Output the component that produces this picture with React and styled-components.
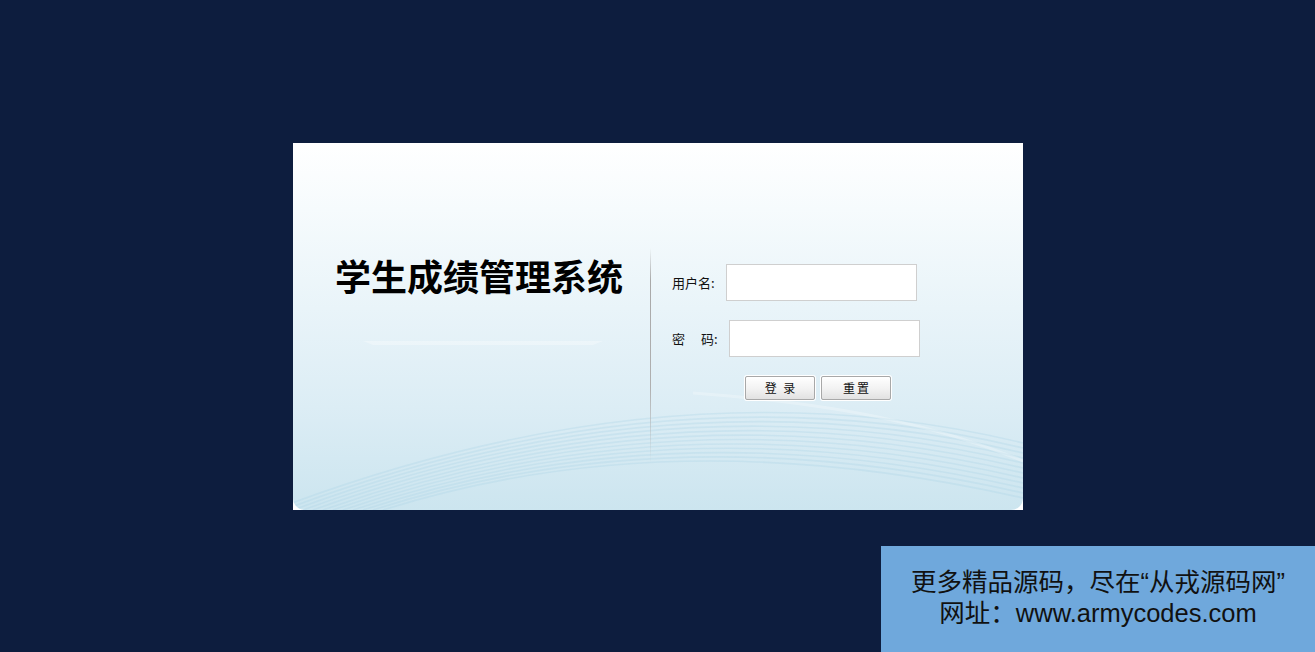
import React from "react";
import styled, { createGlobalStyle } from "styled-components";

const Global = createGlobalStyle`
  html, body { margin: 0; padding: 0; height: 100%; }
  body { background: #0d1d3e; font-family: "Noto Sans CJK SC", sans-serif; }
  #root { height: 100%; }
`;

const Page = styled.div`
  position: relative;
  height: 652px;
  display: flex;
  align-items: center;
  justify-content: center;
  overflow: hidden;
`;

const Frame = styled.div`
  width: 730px;
  height: 367px;
  background: #ffffff;
  margin-left: 1px;
`;

const Card = styled.div`
  position: relative;
  width: 100%;
  height: 100%;
  border-radius: 0 0 12px 12px;
  background: linear-gradient(180deg, #ffffff 0%, #f6fbfd 18%, #e9f4f9 45%, #dcedf5 72%, #cce5ef 100%);
  display: flex;
  align-items: flex-start;
  overflow: hidden;
`;

const Waves = styled.svg`
  position: absolute;
  left: 0;
  top: 0;
  width: 100%;
  height: 100%;
  pointer-events: none;
`;

const TitleCol = styled.div`
  position: relative;
  width: 315px;
  padding-left: 42px;
  padding-top: 106px;
  box-sizing: content-box;
`;

const Title = styled.h1`
  margin: 0;
  font-family: "Noto Sans CJK SC", sans-serif;
  font-weight: 700;
  font-size: 36px;
  line-height: 52px;
  color: #000;
`;

const Divider = styled.div`
  position: relative;
  width: 1px;
  height: 215px;
  margin-top: 105px;
  background: linear-gradient(180deg, rgba(160,160,160,0) 0%, #a9a9a9 15%, #b0b0b0 65%, rgba(190,200,205,0) 100%);
`;

const Form = styled.div`
  position: relative;
  padding-left: 21px;
  padding-top: 121px;
  display: flex;
  flex-direction: column;
`;

const Row = styled.div`
  display: flex;
  align-items: center;
  height: 37px;
  margin-bottom: ${(p) => p.$gap || 0}px;
`;

const Label = styled.label`
  font-family: "Noto Sans CJK SC", sans-serif;
  font-size: 13px;
  color: #111;
  width: ${(p) => p.$w}px;
  white-space: pre;
`;

const Input = styled.input`
  box-sizing: border-box;
  width: 191px;
  height: 37px;
  border: 1px solid #cfcfcf;
  background: #fff;
  outline: none;
  padding: 0 6px;
  font-size: 14px;
`;

const Buttons = styled.div`
  display: flex;
  gap: 6px;
  margin-left: 73px;
  margin-top: 19px;
`;

const Button = styled.button`
  box-sizing: border-box;
  width: 70px;
  height: 24px;
  border: 1px solid #a8a8a8;
  border-radius: 2px;
  background: linear-gradient(180deg, #ffffff 0%, #f3f3f3 50%, #e2e2e2 100%);
  box-shadow: 0 0 0 1px #ffffff;
  font-family: "Noto Sans CJK SC", sans-serif;
  font-size: 12px;
  color: #111;
  letter-spacing: ${(p) => p.$ls || 0}px;
  text-indent: ${(p) => p.$ls || 0}px;
  padding: 0;
  cursor: pointer;
`;

const Banner = styled.div`
  position: absolute;
  right: 0;
  bottom: 0;
  width: 434px;
  height: 106px;
  background: #6fa8dc;
  display: flex;
  flex-direction: column;
  align-items: center;
  justify-content: center;
  font-family: "Liberation Sans", "Noto Sans CJK SC", sans-serif;
  font-size: 25.5px;
  line-height: 31px;
  color: #111;
  padding-bottom: 3px;
  box-sizing: border-box;
`;

export default function App() {
  const waves = [];
  for (let i = 0; i < 12; i++) {
    const o = i * 5;
    waves.push(
      <path
        key={i}
        d={`M ${-20 + o * 2} 367 Q 380 ${215 + o * 1.1}, 730 ${300 + o * 1.0}`}
        fill="none"
        stroke="rgba(170, 210, 230, 0.32)"
        strokeWidth="1.6"
      />
    );
  }
  return (
    <>
      <Global />
      <Page>
        <Frame>
          <Card>
            <Waves viewBox="0 0 730 367" preserveAspectRatio="none">
              <path d="M 70 198 L 310 198 L 300 202 L 80 202 Z" fill="rgba(255,255,255,0.3)" />
              {waves}
              <path d="M 400 250 C 560 262, 650 285, 730 318" fill="none" stroke="rgba(255,255,255,0.25)" strokeWidth="3" />
            </Waves>
            <TitleCol>
              <Title>学生成绩管理系统</Title>
            </TitleCol>
            <Divider />
            <Form>
              <Row $gap={19}>
                <Label $w={54}>用户名:</Label>
                <Input type="text" />
              </Row>
              <Row>
                <Label $w={57}>{"密　 码:"}</Label>
                <Input type="password" />
              </Row>
              <Buttons>
                <Button $ls={2}>登 录</Button>
                <Button $ls={2}>重置</Button>
              </Buttons>
            </Form>
          </Card>
        </Frame>
        <Banner>
          <div>更多精品源码，尽在“从戎源码网”</div>
          <div>网址：www.armycodes.com</div>
        </Banner>
      </Page>
    </>
  );
}
